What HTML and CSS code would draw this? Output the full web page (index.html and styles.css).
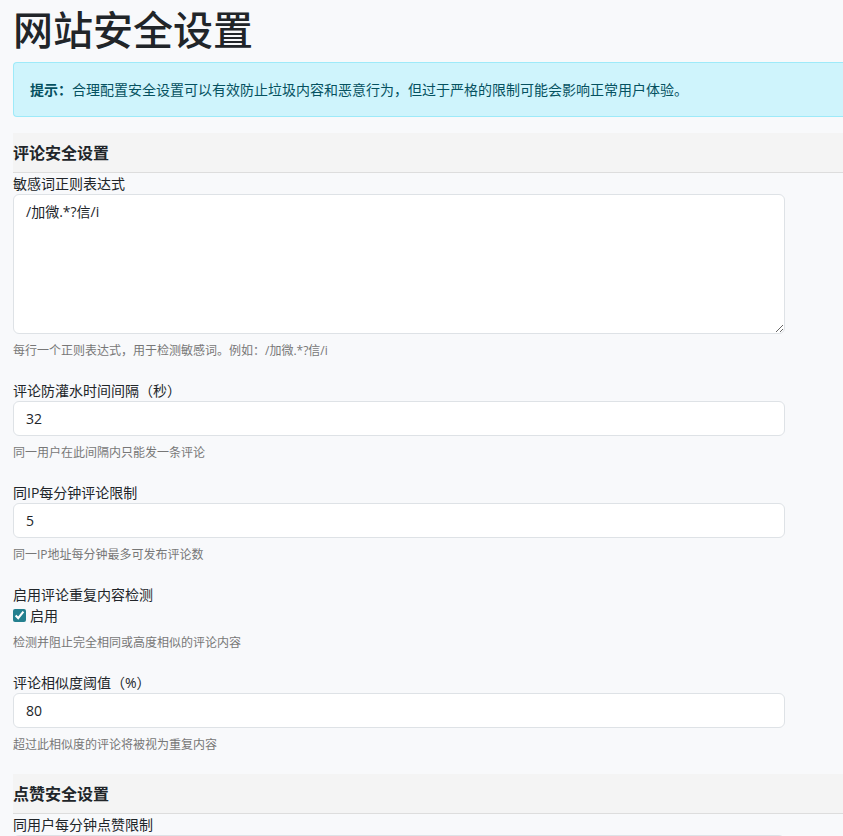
FILE: index.html
```html
<!DOCTYPE html>
<html lang="zh-CN">
<head>
  <meta charset="UTF-8">
  <meta name="viewport" content="width=device-width, initial-scale=1.0">
  <title>网站安全设置</title>
  <link rel="stylesheet" href="styles.css">
</head>
<body>
  <main class="container">
    <h1>网站安全设置</h1>
    <div class="alert"><strong>提示：</strong>合理配置安全设置可以有效防止垃圾内容和恶意行为，但过于严格的限制可能会影响正常用户体验。</div>

    <form>
      <section>
        <h2 class="section-title">评论安全设置</h2>
        <div class="form-group">
          <label for="sensitive-words">敏感词正则表达式</label>
          <textarea class="form-control" id="sensitive-words" rows="6">/加微.*?信/i</textarea>
          <p class="help">每行一个正则表达式，用于检测敏感词。例如：/加微.*?信/i</p>
        </div>
        <div class="form-group">
          <label for="comment-interval">评论防灌水时间间隔（秒）</label>
          <input class="form-control" type="number" id="comment-interval" value="32">
          <p class="help">同一用户在此间隔内只能发一条评论</p>
        </div>
        <div class="form-group">
          <label for="ip-limit">同IP每分钟评论限制</label>
          <input class="form-control" type="number" id="ip-limit" value="5">
          <p class="help">同一IP地址每分钟最多可发布评论数</p>
        </div>
        <div class="form-group">
          <span class="group-label">启用评论重复内容检测</span>
          <div class="check">
            <input type="checkbox" id="duplicate-check" checked>
            <label for="duplicate-check">启用</label>
          </div>
          <p class="help">检测并阻止完全相同或高度相似的评论内容</p>
        </div>
        <div class="form-group">
          <label for="similarity">评论相似度阈值（%）</label>
          <input class="form-control" type="number" id="similarity" value="80">
          <p class="help">超过此相似度的评论将被视为重复内容</p>
        </div>
      </section>

      <section>
        <h2 class="section-title">点赞安全设置</h2>
        <div class="form-group">
          <label for="like-limit">同用户每分钟点赞限制</label>
          <input class="form-control" type="number" id="like-limit">
        </div>
      </section>
    </form>
  </main>
</body>
</html>
```
FILE: styles.css
```css
* {
  box-sizing: border-box;
}

body {
  height: 100vh;
  margin: 0;
  overflow: hidden;
  background-color: #f8f9fb;
  color: #212529;
  font-family: "Open Sans", "Noto Sans CJK SC", sans-serif;
  font-size: 14px;
  line-height: 21px;
}

.container {
  padding: 6px 0 0 13px;
}

h1 {
  margin: 0 0 8px;
  font-size: 40px;
  font-weight: 500;
  line-height: 48px;
}

.alert {
  margin-bottom: 16px;
  padding: 16px;
  border: 1px solid #9eeaf9;
  border-right: none;
  border-radius: 4px 0 0 4px;
  background-color: #cff4fc;
  color: #055160;
}

.section-title {
  margin: 0;
  padding: 8px 0 7px;
  border-bottom: 1px solid #dddddd;
  background-color: #f4f4f4;
  font-size: 16px;
  font-weight: 700;
  line-height: 24px;
}

.form-group {
  margin-bottom: 20px;
}

.form-group > label,
.group-label {
  display: block;
}

.form-control {
  display: block;
  width: 93%;
  margin: 0;
  padding: 6px 12px;
  border: 1px solid #dee2e6;
  border-radius: 6px;
  background-color: #fff;
  color: #212529;
  font: inherit;
}

input.form-control {
  height: 35px;
  appearance: textfield;
}

textarea.form-control {
  height: 140px;
  resize: vertical;
}

.check {
  display: flex;
  align-items: center;
  gap: 4px;
}

.check input {
  width: 13px;
  height: 13px;
  margin: 0;
  accent-color: #24808f;
}

.help {
  margin: 8px 0 0;
  color: #777777;
  font-size: 12px;
  line-height: 18px;
}
```
